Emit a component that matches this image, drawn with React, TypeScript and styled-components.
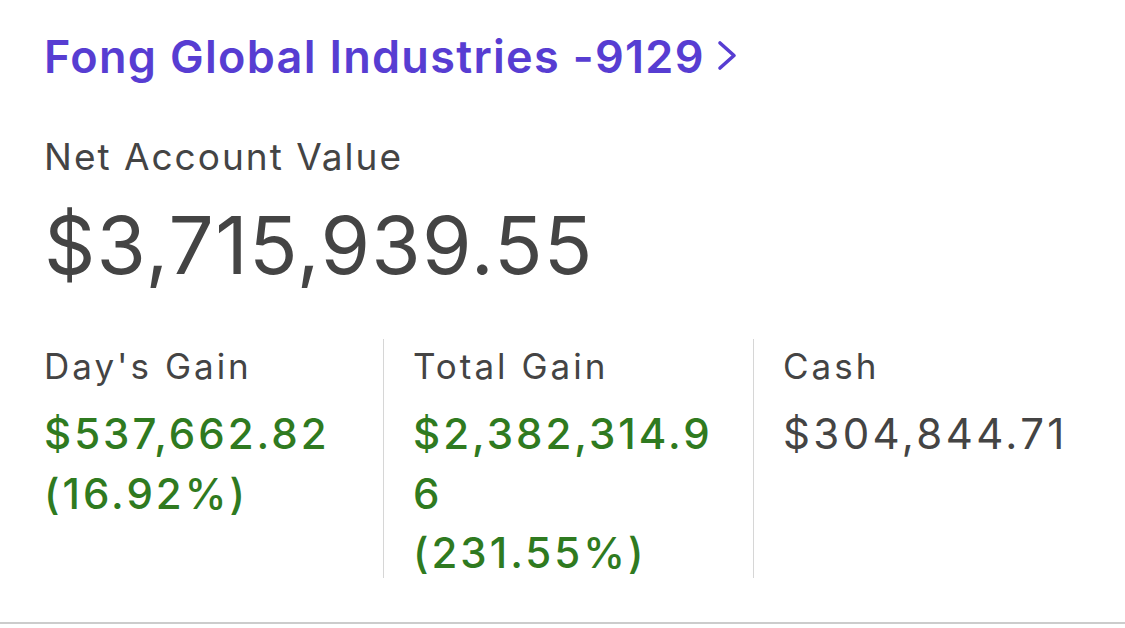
import React from "react";
import styled, { createGlobalStyle } from "styled-components";

const Global = createGlobalStyle`
  html, body { margin: 0; padding: 0; background: #ffffff; }
  body { font-family: Inter, "Noto Sans", sans-serif; -webkit-font-smoothing: antialiased; }
`;

const Card = styled.section`
  width: 1125px;
  height: 628px;
  box-sizing: border-box;
  padding-top: 30px;
  display: flex;
  flex-direction: column;
  background: #ffffff;
`;

const Body = styled.div`
  padding-left: 44px;
  border-bottom: 2px solid #cccccc;
  padding-bottom: 44px;
`;

const TitleLink = styled.a`
  display: inline-flex;
  align-items: center;
  gap: 12px;
  font-size: 45px;
  line-height: 54px;
  font-weight: 600;
  color: #573dd2;
  text-decoration: none;
  letter-spacing: 1.3px;

  svg {
    margin-bottom: 3px;
  }
`;

const Label = styled.div`
  font-size: 37px;
  line-height: 46px;
  color: #444444;
  margin-top: 50px;
  letter-spacing: 2px;
`;

const BigValue = styled.div`
  font-size: 80px;
  line-height: 96px;
  color: #444444;
  margin-top: 17px;
  letter-spacing: 1.25px;
`;

const Stats = styled.div`
  display: grid;
  grid-template-columns: 339px 370px 1fr;
  margin-top: 46px;
`;

const Stat = styled.div<{ $first?: boolean }>`
  padding: 6px 33px 0 ${(p) => (p.$first ? "3px" : "32px")};
  border-left: ${(p) => (p.$first ? "none" : "1px solid #d6d6d6")};
  min-width: 0;
`;

const StatLabel = styled.div`
  font-size: 35px;
  line-height: 42px;
  color: #444444;
  margin-left: -3px;
  letter-spacing: 3px;
`;

const StatValue = styled.div<{ $tone: "gain" | "plain" }>`
  margin-top: 17px;
  margin-left: -3px;
  margin-bottom: -5px;
  font-size: 42px;
  font-weight: ${(p) => (p.$tone === "gain" ? 500 : 400)};
  line-height: 59.5px;
  letter-spacing: ${(p) => (p.$tone === "gain" ? "3px" : "3.4px")};
  color: ${(p) => (p.$tone === "gain" ? "#2f7a20" : "#444444")};
  word-break: break-all;
`;

const Line = styled.div`
  display: block;
`;

const Chevron = () => (
  <svg width="21" height="31" viewBox="0 0 21 31" aria-hidden="true">
    <path
      d="M3 3 L17 15.5 L3 28"
      fill="none"
      stroke="#573dd2"
      strokeWidth="3.6"
      strokeLinecap="round"
      strokeLinejoin="round"
    />
  </svg>
);

export default function App() {
  return (
    <>
      <Global />
      <Card>
        <Body>
          <TitleLink href="#">
            <span>Fong Global Industries -9129</span>
            <Chevron />
          </TitleLink>
          <Label>Net Account Value</Label>
          <BigValue>$3,715,939.55</BigValue>
          <Stats>
            <Stat $first>
              <StatLabel>Day's Gain</StatLabel>
              <StatValue $tone="gain">
                <Line>$537,662.82</Line>
                <Line>(16.92%)</Line>
              </StatValue>
            </Stat>
            <Stat>
              <StatLabel>Total Gain</StatLabel>
              <StatValue $tone="gain">
                <Line>$2,382,314.96</Line>
                <Line>(231.55%)</Line>
              </StatValue>
            </Stat>
            <Stat>
              <StatLabel>Cash</StatLabel>
              <StatValue $tone="plain">
                <Line>$304,844.71</Line>
              </StatValue>
            </Stat>
          </Stats>
        </Body>
      </Card>
    </>
  );
}
